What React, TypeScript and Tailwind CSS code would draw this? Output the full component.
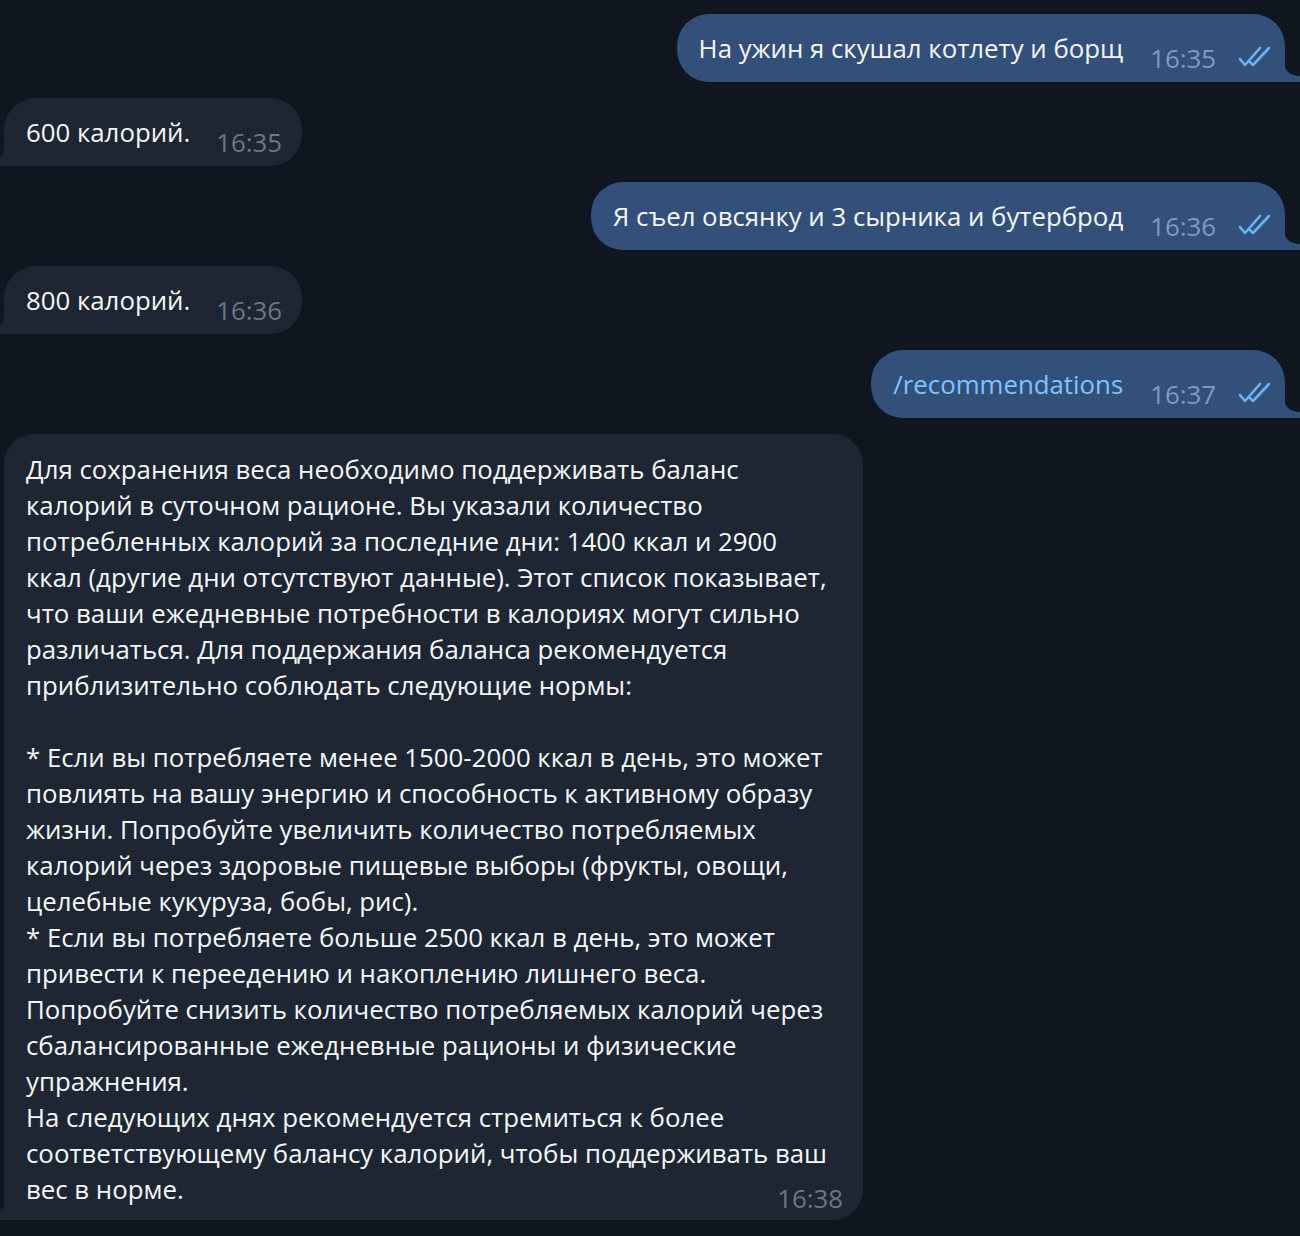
import React from 'react';

const longLines = [
  'Для сохранения веса необходимо поддерживать баланс',
  'калорий в суточном рационе. Вы указали количество',
  'потребленных калорий за последние дни: 1400 ккал и 2900',
  'ккал (другие дни отсутствуют данные). Этот список показывает,',
  'что ваши ежедневные потребности в калориях могут сильно',
  'различаться. Для поддержания баланса рекомендуется',
  'приблизительно соблюдать следующие нормы:',
  '',
  '* Если вы потребляете менее 1500-2000 ккал в день, это может',
  'повлиять на вашу энергию и способность к активному образу',
  'жизни. Попробуйте увеличить количество потребляемых',
  'калорий через здоровые пищевые выборы (фрукты, овощи,',
  'целебные кукуруза, бобы, рис).',
  '* Если вы потребляете больше 2500 ккал в день, это может',
  'привести к переедению и накоплению лишнего веса.',
  'Попробуйте снизить количество потребляемых калорий через',
  'сбалансированные ежедневные рационы и физические',
  'упражнения.',
  'На следующих днях рекомендуется стремиться к более',
  'соответствующему балансу калорий, чтобы поддерживать ваш',
];

function Checks() {
  return <svg width="34" height="22" viewBox="0 0 34 22" fill="none" stroke="#6ab4f4" strokeWidth="2.6" strokeLinecap="round" strokeLinejoin="round" className="relative top-[9px] ml-[22px] shrink-0">
      <path d="M2 13 L7 19 L22 2" />
      <path d="M12 16 L15 19 L31 2" />
    </svg>;
}

function TailRight() {
  return <svg width="16" height="20" viewBox="0 0 16 20" className="absolute -right-[15px] bottom-0">
      <path d="M0 0 C0 8 6 14 16 14 L16 20 L0 20 Z" fill="#33507a" />
    </svg>;
}

function TailLeft() {
  return <svg width="16" height="20" viewBox="0 0 16 20" className="absolute -left-[15px] bottom-0">
      <path d="M16 0 C16 8 10 14 0 14 L0 20 L16 20 Z" fill="#1e2633" />
    </svg>;
}

function Outgoing({ text, time, command }: { text: string; time: string; command?: boolean }) {
  return <div className="flex justify-end pr-[15px]">
      <div className="relative flex items-center h-[68px] pl-[22px] pr-[13px] bg-[#33507a] rounded-[32px] rounded-br-none">
        <span className={`whitespace-nowrap ${command ? 'text-[#80c4ff]' : 'text-[#f5f7f9]'}`}>{text}</span>
        <span className="relative top-[10px] ml-[27px] text-[#7c9dc2] whitespace-nowrap">{time}</span>
        <Checks />
        <TailRight />
      </div>
    </div>;
}

function Incoming({ text, time }: { text: string; time: string }) {
  return <div className="flex pl-[4px]">
      <div className="relative flex items-center h-[68px] pl-[22px] pr-[20px] bg-[#1e2633] rounded-[32px] rounded-bl-none">
        <span className="whitespace-nowrap text-[#f5f7f9]">{text}</span>
        <span className="relative top-[10px] ml-[26px] text-[#6b7785] whitespace-nowrap">{time}</span>
        <TailLeft />
      </div>
    </div>;
}

export default function App() {
  return <div className="w-full h-[1236px] overflow-hidden bg-[#0f1620] pt-[14px] flex flex-col gap-4 text-[25.8px] leading-[36px]" style={{ fontFamily: '"Open Sans", "Noto Sans", sans-serif' }}>
      <Outgoing text="На ужин я скушал котлету и борщ" time="16:35" />
      <Incoming text="600 калорий." time="16:35" />
      <Outgoing text="Я съел овсянку и 3 сырника и бутерброд" time="16:36" />
      <Incoming text="800 калорий." time="16:36" />
      <Outgoing text="/recommendations" time="16:37" command />
      <div className="flex pl-[4px]">
        <div className="relative w-[859px] pt-[17px] pb-[13px] pl-[22px] pr-[20px] bg-[#1e2633] rounded-[30px] rounded-bl-none text-[#f5f7f9]">
          {longLines.map((line, i) => <div key={i} className="whitespace-nowrap h-[36px]">{line}</div>)}
          <div className="flex justify-between">
            <span>вес в норме.</span>
            <span className="relative top-[9px] text-[#6b7785]">16:38</span>
          </div>
          <TailLeft />
        </div>
      </div>
    </div>;
}
